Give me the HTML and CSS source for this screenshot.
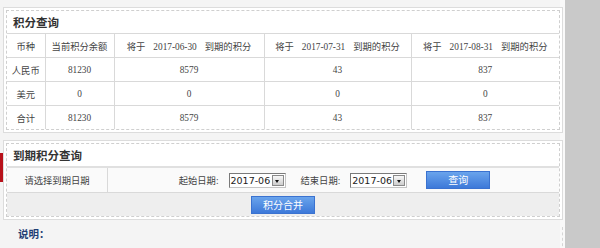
FILE: index.html
```html
<!DOCTYPE html>
<html lang="zh-CN">
<head>
  <meta charset="UTF-8">
  <title>积分查询</title>
  <link rel="stylesheet" href="styles.css">
</head>
<body>
  <div class="page">
    <div class="side-tab"></div>

    <!-- 积分查询 -->
    <div class="panel">
      <div class="panel-inner">
        <div class="panel-title">积分查询</div>
        <table class="grid">
          <colgroup>
            <col class="c1"><col class="c2"><col class="c3"><col class="c4"><col>
          </colgroup>
          <tr>
            <th>币种</th>
            <th>当前积分余额</th>
            <th>将于<span class="date">2017-06-30</span>到期的积分</th>
            <th>将于<span class="date">2017-07-31</span>到期的积分</th>
            <th>将于<span class="date">2017-08-31</span>到期的积分</th>
          </tr>
          <tr><td>人民币</td><td>81230</td><td>8579</td><td>43</td><td>837</td></tr>
          <tr><td>美元</td><td>0</td><td>0</td><td>0</td><td>0</td></tr>
          <tr><td>合计</td><td>81230</td><td>8579</td><td>43</td><td>837</td></tr>
        </table>
      </div>
    </div>

    <!-- 到期积分查询 -->
    <div class="panel">
      <div class="panel-inner">
        <div class="panel-title title-thick">到期积分查询</div>
        <div class="query-row">
          <div class="query-label">请选择到期日期</div>
          <div class="query-fields">
            <span class="field-label">起始日期:</span>
            <span class="select"><span class="select-value">2017-06</span><span class="select-arrow"></span></span>
            <span class="field-label">结束日期:</span>
            <span class="select"><span class="select-value">2017-06</span><span class="select-arrow"></span></span>
            <button class="btn btn-query">查询</button>
          </div>
        </div>
        <div class="action-row">
          <button class="btn">积分合并</button>
        </div>
      </div>
    </div>

    <div class="notes">
      <h3>说明：</h3>
    </div>
  </div>
</body>
</html>
```

FILE: styles.css
```css
/* Global Styles */
body {
  margin: 0;
  padding: 0;
  background-color: #c9c9c9;
  font-family: "Liberation Serif", "Noto Sans CJK SC", serif;
  color: #444;
  height: 248px;
  overflow: hidden;
}

.page {
  position: relative;
  width: 565px;
  height: 248px;
  padding: 7px 0 0 3px;
  box-sizing: border-box;
  background-color: #f4f4f4;
  border-right: 5px solid #f9f9f9;
}

/* little red tab at the left edge */
.side-tab {
  position: absolute;
  left: 0;
  top: 153px;
  width: 3px;
  height: 29px;
  background-color: #b8121b;
}

/* Panels */
.panel {
  width: 560px;
  box-sizing: border-box;
  border: 1px solid #dcdcdc;
  background-color: #fff;
  padding: 2px;
  margin-bottom: 7px;
}

.panel-inner {
  border: 1px dashed #cfcfcf;
}

.panel-title {
  height: 22px;
  line-height: 22px;
  padding-left: 6px;
  font-family: "Noto Sans CJK SC", sans-serif;
  font-size: 11.5px;
  font-weight: bold;
  color: #333;
}

.title-thick {
  border-bottom: 2px solid #e0e0e0;
}

/* Points table */
.grid {
  width: 100%;
  border-collapse: collapse;
  table-layout: fixed;
  font-size: 9.3px;
}

.grid col.c1 { width: 38px; }
.grid col.c2 { width: 69px; }
.grid col.c3 { width: 150px; }
.grid col.c4 { width: 147px; }

.grid th,
.grid td {
  height: 23px;
  padding: 0;
  text-align: center;
  font-weight: normal;
  border-top: 1px solid #d9d9d9;
  border-left: 1px solid #d9d9d9;
  white-space: nowrap;
}

.grid th:first-child,
.grid td:first-child {
  border-left: none;
}

.grid .date {
  margin: 0 8px;
}

/* Query form */
.query-row {
  display: flex;
  height: 24px;
  background-color: #fafafa;
  border-bottom: 1px solid #d9d9d9;
  font-size: 9.3px;
}

.query-label {
  width: 100px;
  border-right: 1px solid #d9d9d9;
  display: flex;
  align-items: center;
  justify-content: center;
}

.query-fields {
  flex: 1;
  display: flex;
  align-items: center;
  justify-content: center;
  padding-left: 2px;
}

.field-label {
  margin-right: 10px;
}

.select {
  display: inline-flex;
  align-items: center;
  width: 57px;
  height: 15px;
  box-sizing: border-box;
  border: 1px solid #c4c4c4;
  border-top-color: #7a7a7a;
  border-left-color: #7a7a7a;
  background-color: #fff;
  margin-right: 15px;
  white-space: nowrap;
}

.select-value {
  flex: 1;
  padding-left: 1px;
  font-family: "DejaVu Sans", sans-serif;
  font-size: 9.5px;
  line-height: 13px;
  color: #222;
}

.select-arrow {
  position: relative;
  flex: none;
  width: 12px;
  height: 11px;
  margin-right: 1px;
  box-sizing: border-box;
  border: 1px solid #8a8a8a;
  background: linear-gradient(#f8f8f8, #cdcdcd);
}

.select-arrow::after {
  content: "";
  position: absolute;
  left: 2.5px;
  top: 4px;
  border-left: 2.5px solid transparent;
  border-right: 2.5px solid transparent;
  border-top: 3px solid #111;
}

.btn {
  width: 64px;
  height: 18px;
  padding: 0;
  border: 1px solid #3a72d0;
  background: linear-gradient(#6aa4ec, #3d79d9);
  color: #fff;
  font-family: "Noto Sans CJK SC", sans-serif;
  font-size: 10px;
  line-height: 16px;
  cursor: pointer;
}

.btn-query {
  margin-left: 4px;
}

.action-row {
  height: 23px;
  background-color: #eeeeee;
  display: flex;
  justify-content: center;
  align-items: center;
}

/* Notes */
.notes {
  width: 560px;
  height: 30px;
  box-sizing: border-box;
  border-right: 1px dashed #d6d6d6;
}

.notes h3 {
  margin: 0;
  padding: 0 0 0 15px;
  line-height: 14px;
  font-family: "Noto Sans CJK SC", sans-serif;
  font-size: 10.5px;
  font-weight: bold;
  color: #1f3e74;
}
```
